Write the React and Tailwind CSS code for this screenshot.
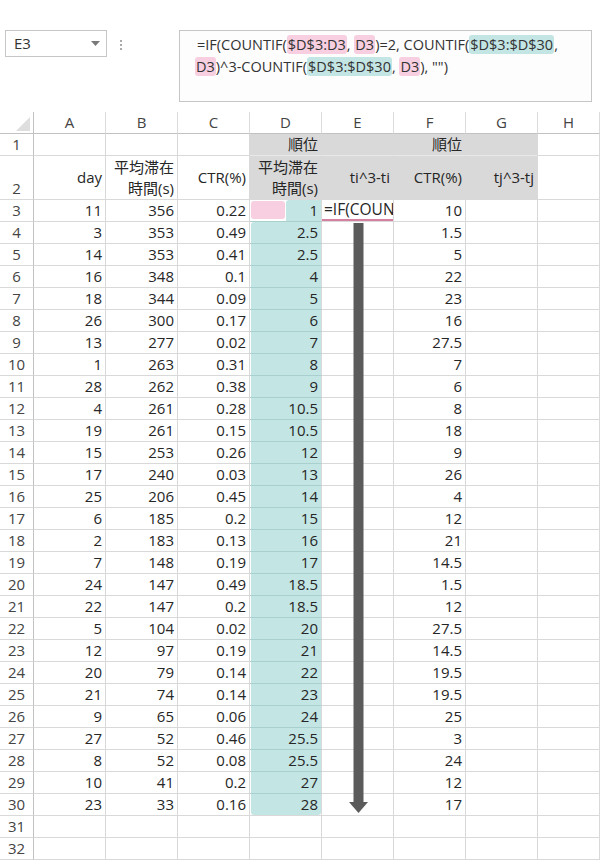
const rows = [
  [11, 356, 0.22, 1, 10],
  [3, 353, 0.49, 2.5, 1.5],
  [14, 353, 0.41, 2.5, 5],
  [16, 348, 0.1, 4, 22],
  [18, 344, 0.09, 5, 23],
  [26, 300, 0.17, 6, 16],
  [13, 277, 0.02, 7, 27.5],
  [1, 263, 0.31, 8, 7],
  [28, 262, 0.38, 9, 6],
  [4, 261, 0.28, 10.5, 8],
  [19, 261, 0.15, 10.5, 18],
  [15, 253, 0.26, 12, 9],
  [17, 240, 0.03, 13, 26],
  [25, 206, 0.45, 14, 4],
  [6, 185, 0.2, 15, 12],
  [2, 183, 0.13, 16, 21],
  [7, 148, 0.19, 17, 14.5],
  [24, 147, 0.49, 18.5, 1.5],
  [22, 147, 0.2, 18.5, 12],
  [5, 104, 0.02, 20, 27.5],
  [12, 97, 0.19, 21, 14.5],
  [20, 79, 0.14, 22, 19.5],
  [21, 74, 0.14, 23, 19.5],
  [9, 65, 0.06, 24, 25],
  [27, 52, 0.46, 25.5, 3],
  [8, 52, 0.08, 25.5, 24],
  [10, 41, 0.2, 27, 12],
  [23, 33, 0.16, 28, 17],
];

const cols = ['A', 'B', 'C', 'D', 'E', 'F', 'G', 'H'];

const Pink = ({ children }) => (
  <span className="bg-[#f7cfe0] rounded-[3px] px-[1px]">{children}</span>
);
const Teal = ({ children }) => (
  <span className="bg-[#c3e5e4] rounded-[3px] px-[1px]">{children}</span>
);

const Cell = ({ children, className = '' }) => (
  <div className={'h-[22px] border-r border-b border-[#d9d9d9] text-right pr-[3px] leading-[21px] whitespace-nowrap ' + className}>
    {children}
  </div>
);

const RowHead = ({ children, className = '' }) => (
  <div className={'border-r border-b border-r-[#c2c2c2] border-b-[#d9d9d9] text-center text-[#444] ' + className}>
    {children}
  </div>
);

export default function App() {
  return (
    <div className="relative w-[600px] h-[860px] overflow-hidden bg-white text-[#262626] text-[15px] font-['Open_Sans','Noto_Sans_CJK_JP',sans-serif]">
      {/* Name box + formula bar */}
      <div className="flex items-start pt-[30px] h-[112px]">
        <div className="ml-[5px] w-[102px] h-[27px] border border-[#c6c6c6] flex items-center justify-between pl-[8px] pr-[6px] text-[15px] text-[#333]">
          <span>E3</span>
          <svg width="9" height="5" viewBox="0 0 9 5"><path d="M0 0 L9 0 L4.5 5 Z" fill="#7a7a7a" /></svg>
        </div>
        <div className="ml-[13px] mt-[10px] flex flex-col gap-[2px]">
          <div className="w-[2px] h-[2px] bg-[#aaa]"></div>
          <div className="w-[2px] h-[2px] bg-[#aaa]"></div>
          <div className="w-[2px] h-[2px] bg-[#aaa]"></div>
        </div>
        <div className="ml-[57px] w-[413px] h-[72px] border border-[#c6c6c6] bg-[#fdfdfd] pl-[15px] pt-[3px] leading-[22px] text-[14.5px] text-[#333]">
          <div className="pl-[2px]">
            =IF(COUNTIF(<Pink>$D$3:D3</Pink>, <Pink>D3</Pink>)=2, COUNTIF(<Teal>$D$3:$D$30</Teal>,
          </div>
          <div>
            <Pink>D3</Pink>)^3-COUNTIF(<Teal>$D$3:$D$30</Teal>, <Pink>D3</Pink>), "")
          </div>
        </div>
      </div>

      {/* Sheet */}
      <div className="grid grid-cols-[34px_repeat(7,72px)_1fr]">
        {/* column headers */}
        <div className="h-[22px] border-r border-b border-r-[#c2c2c2] border-b-[#c2c2c2] flex items-end justify-end pr-[3px] pb-[2px]">
          <svg width="14" height="14" viewBox="0 0 14 14"><path d="M14 0 L14 14 L0 14 Z" fill="#dedede" /></svg>
        </div>
        {cols.map(function(c) {
          return (
            <div key={c} className="h-[22px] border-r border-b border-r-[#dcdcdc] border-b-[#c2c2c2] text-center leading-[21px] text-[#444]">
              {c}
            </div>
          );
        })}

        {/* row 1 */}
        <RowHead className="h-[22px] leading-[21px]">1</RowHead>
        <Cell></Cell>
        <Cell></Cell>
        <Cell></Cell>
        <Cell className="bg-[#d9d9d9] border-r-[#d9d9d9] border-b-[#e8e8e8] text-center pr-0">順位</Cell>
        <Cell className="bg-[#d9d9d9] border-r-[#d9d9d9] border-b-[#e8e8e8]"></Cell>
        <Cell className="bg-[#d9d9d9] border-r-[#d9d9d9] border-b-[#e8e8e8] text-center pr-0">順位</Cell>
        <Cell className="bg-[#d9d9d9] border-b-[#e8e8e8]"></Cell>
        <Cell></Cell>

        {/* row 2 */}
        <RowHead className="h-[44px] flex items-end justify-center leading-[22px]">2</RowHead>
        <Cell className="h-[44px] flex items-center justify-end">day</Cell>
        <Cell className="h-[44px] flex flex-col justify-center items-end leading-[21.5px]">
          <span>平均滞在</span>
          <span>時間(s)</span>
        </Cell>
        <Cell className="h-[44px] flex items-center justify-end">CTR(%)</Cell>
        <Cell className="h-[44px] bg-[#d9d9d9] border-r-[#d9d9d9] flex flex-col justify-center items-end leading-[21.5px]">
          <span>平均滞在</span>
          <span>時間(s)</span>
        </Cell>
        <Cell className="h-[44px] bg-[#d9d9d9] border-r-[#d9d9d9] flex items-center justify-end">ti^3-ti</Cell>
        <Cell className="h-[44px] bg-[#d9d9d9] border-r-[#d9d9d9] flex items-center justify-end">CTR(%)</Cell>
        <Cell className="h-[44px] bg-[#d9d9d9] flex items-center justify-end">tj^3-tj</Cell>
        <Cell className="h-[44px]"></Cell>

        {/* data rows */}
        {rows.map(function(r, i) {
          const n = i + 3;
          const first = i === 0;
          const last = i === rows.length - 1;
          return [
            <RowHead key={'h' + n} className="h-[22px] leading-[21px]">{n}</RowHead>,
            <Cell key={'a' + n}>{r[0]}</Cell>,
            <Cell key={'b' + n}>{r[1]}</Cell>,
            <Cell key={'c' + n}>{r[2]}</Cell>,
            first ? (
              <div key={'d' + n} className="h-[22px] border-r border-b border-r-[#d9d9d9] border-b-[#a9cfce] flex">
                <div className="ml-[1px] mt-[1px] w-[34px] h-[18px] rounded-[3px] bg-[#f7cfe0]"></div>
                <div className="flex-1 ml-[1px] h-[21px] rounded-tl-[3px] bg-[#c3e5e4] text-right pr-[3px] leading-[21px]">{r[3]}</div>
              </div>
            ) : (
              <div key={'d' + n} className={'h-[22px] border-r border-b border-r-[#d9d9d9] ' + (last ? 'border-b-[#d9d9d9]' : 'border-b-[#a9cfce]')}>
                <div className={'ml-[1px] h-[21px] bg-[#c3e5e4] text-right pr-[3px] leading-[21px] ' + (i === 1 ? 'rounded-tl-[3px]' : '') + (last ? 'rounded-b-[3px]' : '')}>
                  {r[3]}
                </div>
              </div>
            ),
            first ? (
              <div key={'e' + n} className="h-[22px] border-r border-b border-[#d9d9d9] overflow-hidden">
                <div className="h-[21px] border-b-2 border-[#d6809f] whitespace-nowrap pl-[2px] leading-[19px] text-[15.5px] overflow-hidden">=IF(COUN</div>
              </div>
            ) : (
              <Cell key={'e' + n}></Cell>
            ),
            <Cell key={'f' + n}>{r[4]}</Cell>,
            <Cell key={'g' + n}></Cell>,
            <Cell key={'x' + n}></Cell>,
          ];
        })}

        {[31, 32].map(function(n) {
          return [
            <RowHead key={'h' + n} className="h-[22px] leading-[21px]">{n}</RowHead>,
            ...cols.map(function(c) { return <Cell key={c + n}></Cell>; }),
          ];
        })}
      </div>

      {/* fill-down arrow */}
      <svg className="absolute left-[349px] top-[223px]" width="20" height="591" viewBox="0 0 20 591">
        <rect x="4.5" y="0" width="10" height="580" fill="#5b5b5b" />
        <path d="M0 579 L19 579 L9.5 590 Z" fill="#5b5b5b" />
      </svg>
    </div>
  );
}
